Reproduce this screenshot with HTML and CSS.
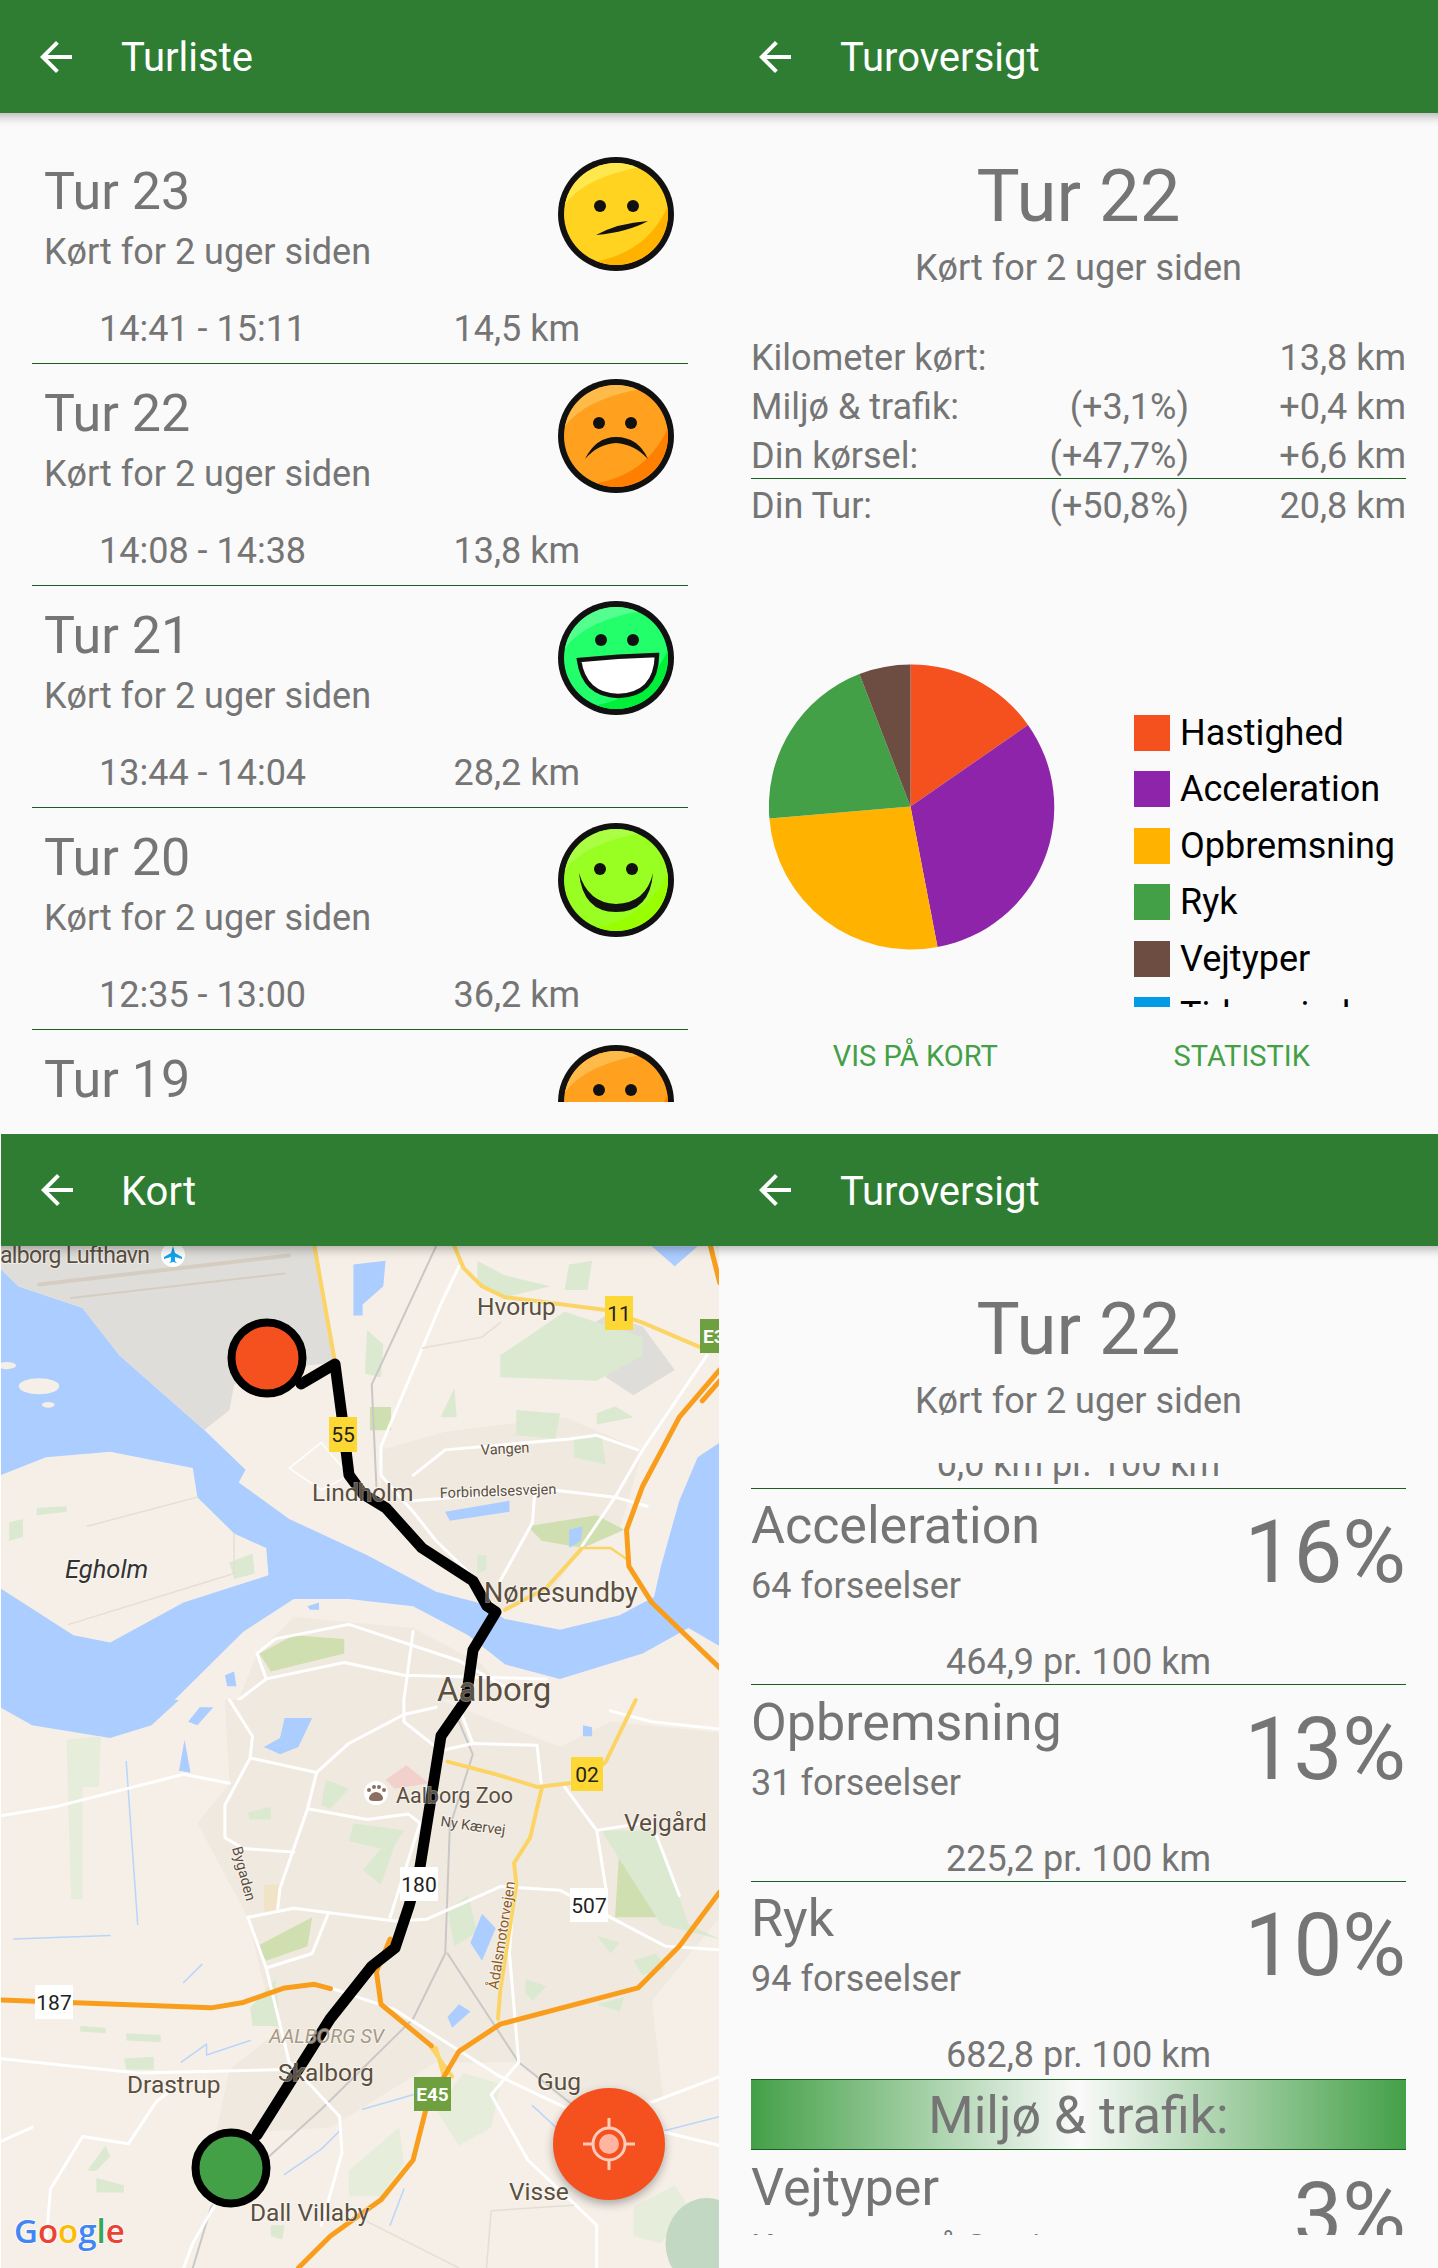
FILE: index.html
```html
<!DOCTYPE html>
<html lang="da">
<head>
  <meta charset="UTF-8" />
  <title>Turoversigt</title>
  <link rel="stylesheet" href="styles.css">
</head>
<body>
  <svg class="defs" width="0" height="0">
    <defs>
      <clipPath id="faceClip"><ellipse cx="58" cy="57" rx="52" ry="51"/></clipPath>
      <symbol id="face" viewBox="0 0 116 114">
        <ellipse cx="58" cy="57" rx="58" ry="57" fill="#111"/>
        <g clip-path="url(#faceClip)">
          <rect width="116" height="114" class="face-main"/>
          <path class="face-light" d="M4 52 Q22 20 88 9 L60 0 L0 0 Z"/>
          <path class="face-shade" d="M26 106 Q90 100 112 44 L116 114 L26 114 Z"/>
        </g>
      </symbol>
      <path id="arrow" d="M20 11H7.83l5.59-5.59L12 4l-8 8 8 8 1.41-1.41L7.83 13H20v-2z"/>
    </defs>
  </svg>

  <div class="screens">
    <!-- trip list -->
    <section class="screen">
      <header class="appbar">
        <svg class="back" viewBox="0 0 24 24"><use href="#arrow"/></svg>
        <h2>Turliste</h2>
      </header>
      <div class="trips">
        <div class="trip">
          <div class="trip-top">
            <div class="trip-text">
              <h3>Tur 23</h3>
              <p>Kørt for 2 uger siden</p>
            </div>
            <svg class="smiley yellow" viewBox="0 0 116 114">
              <use href="#face"/>
              <ellipse class="eye" cx="42" cy="49" rx="6" ry="6"/>
              <ellipse class="eye" cx="75" cy="49" rx="6" ry="6"/>
              <path class="eye" d="M38 78 Q60 66 90 64 Q70 75 38 78Z"/>
            </svg>
          </div>
          <div class="trip-meta"><span>14:41 - 15:11</span><span>14,5 km</span></div>
        </div>
        <div class="trip">
          <div class="trip-top">
            <div class="trip-text">
              <h3>Tur 22</h3>
              <p>Kørt for 2 uger siden</p>
            </div>
            <svg class="smiley orange" viewBox="0 0 116 114">
              <use href="#face"/>
              <ellipse class="eye" cx="41" cy="44" rx="6" ry="6"/>
              <ellipse class="eye" cx="73" cy="44" rx="6" ry="6"/>
              <path class="eye" d="M27 80 Q38 58 58 58 Q80 58 90 80 Q76 65 58 64 Q40 65 27 80Z"/>
            </svg>
          </div>
          <div class="trip-meta"><span>14:08 - 14:38</span><span>13,8 km</span></div>
        </div>
        <div class="trip">
          <div class="trip-top">
            <div class="trip-text">
              <h3>Tur 21</h3>
              <p>Kørt for 2 uger siden</p>
            </div>
            <svg class="smiley green" viewBox="0 0 116 114">
              <use href="#face"/>
              <ellipse class="eye" cx="43" cy="39" rx="6" ry="6"/>
              <ellipse class="eye" cx="75" cy="39" rx="6" ry="6"/>
              <path class="mouth" d="M21 59 Q60 55 99 54 Q98 94 60 95 Q26 94 21 59Z"/>
            </svg>
          </div>
          <div class="trip-meta"><span>13:44 - 14:04</span><span>28,2 km</span></div>
        </div>
        <div class="trip">
          <div class="trip-top">
            <div class="trip-text">
              <h3>Tur 20</h3>
              <p>Kørt for 2 uger siden</p>
            </div>
            <svg class="smiley lime" viewBox="0 0 116 114">
              <use href="#face"/>
              <ellipse class="eye" cx="42" cy="46" rx="6" ry="6"/>
              <ellipse class="eye" cx="74" cy="46" rx="6" ry="6"/>
              <path class="eye" d="M21 50 Q25 89 58 89 Q92 89 95 50 Q88 80 58 81 Q30 80 21 50Z"/>
            </svg>
          </div>
          <div class="trip-meta"><span>12:35 - 13:00</span><span>36,2 km</span></div>
        </div>
        <div class="trip">
          <div class="trip-top">
            <div class="trip-text">
              <h3>Tur 19</h3>
              <p>Kørt for 2 uger siden</p>
            </div>
            <svg class="smiley orange" viewBox="0 0 116 114">
              <use href="#face"/>
              <ellipse class="eye" cx="41" cy="45" rx="6" ry="6"/>
              <ellipse class="eye" cx="73" cy="45" rx="6" ry="6"/>
            </svg>
          </div>
        </div>
      </div>
    </section>

    <!-- trip overview -->
    <section class="screen">
      <header class="appbar">
        <svg class="back" viewBox="0 0 24 24"><use href="#arrow"/></svg>
        <h2>Turoversigt</h2>
      </header>
      <div class="heading">
        <h1>Tur 22</h1>
        <p>Kørt for 2 uger siden</p>
      </div>
      <div class="summary">
        <div class="summary-row"><span>Kilometer kørt:</span><span></span><span>13,8 km</span></div>
        <div class="summary-row"><span>Miljø &amp; trafik:</span><span>(+3,1%)</span><span>+0,4 km</span></div>
        <div class="summary-row ruled"><span>Din kørsel:</span><span>(+47,7%)</span><span>+6,6 km</span></div>
        <div class="summary-row"><span>Din Tur:</span><span>(+50,8%)</span><span>20,8 km</span></div>
      </div>
      <div class="chart">
        <svg class="pie" viewBox="0 0 286 286">
          <path class="slice-speed" d="M141.5 142.5 V0.5 A142 142 0 0 1 259 61 Z"/>
          <path class="slice-accel" d="M141.5 142.5 L259 61 A142 142 0 0 1 168.5 283 Z"/>
          <path class="slice-brake" d="M141.5 142.5 L168.5 283 A142 142 0 0 1 0.4 154.5 Z"/>
          <path class="slice-jerk" d="M141.5 142.5 L0.4 154.5 A142 142 0 0 1 90.4 10 Z"/>
          <path class="slice-road" d="M141.5 142.5 L90.4 10 A142 142 0 0 1 141.5 0.5 Z"/>
        </svg>
        <ul class="legend">
          <li><i class="slice-speed"></i>Hastighed</li>
          <li><i class="slice-accel"></i>Acceleration</li>
          <li><i class="slice-brake"></i>Opbremsning</li>
          <li><i class="slice-jerk"></i>Ryk</li>
          <li><i class="slice-road"></i>Vejtyper</li>
          <li><i class="slice-time"></i>Tidsperiode</li>
        </ul>
      </div>
      <div class="actions">
        <a href="#">VIS PÅ KORT</a>
        <a href="#">STATISTIK</a>
      </div>
    </section>

    <!-- map -->
    <section class="screen map-screen">
      <header class="appbar">
        <svg class="back" viewBox="0 0 24 24"><use href="#arrow"/></svg>
        <h2>Kort</h2>
      </header>
      <div class="map">
        <svg class="map-canvas" viewBox="1 1246 718 1022">
          <rect class="land" x="0" y="1246" width="720" height="1022"/>

          <!-- north of the fjord -->
          <g transform="matrix(.459 0 0 .3635 0 1130)">
            <path class="water" d="M0 380 L40 430 L180 490 L260 620 L445 825 L535 935 L520 970 L630 1070 L800 1170 L950 1270 L1040 1300 L1100 1345 L1220 1375 L1350 1335 L1425 1285 L1440 1200 L1480 1020 L1520 900 L1568 860 L1568 1420 L1500 1370 L1400 1440 L1220 1510 L1100 1470 L1020 1390 L900 1310 L760 1290 L640 1290 L530 1380 L380 1568 L0 1568 Z"/>
            <path class="land" d="M0 950 L100 900 L240 885 L420 930 L430 1010 L510 1110 L580 1150 L585 1225 L400 1300 L240 1410 L160 1390 L0 1260 Z"/>
            <ellipse class="land" cx="85" cy="705" rx="44" ry="22"/>
            <ellipse class="land" cx="15" cy="648" rx="20" ry="10"/>
            <ellipse class="land" cx="105" cy="756" rx="14" ry="8"/>
            <path class="airport" d="M0 320 L690 320 L730 640 L650 650 L510 700 L500 770 L445 825 L260 620 L180 490 L40 430 L0 380 Z"/>
            <path class="urban" d="M830 880 L970 830 L1230 790 L1400 880 L1350 1100 L1270 1150 L1200 1270 L1090 1320 L1000 1220 L900 1100 L830 1000 Z"/>
            <path class="urban" d="M560 1440 L640 1340 L900 1370 L1050 1470 L1110 1568 L520 1568 Z"/>
            <path class="airport" d="M1270 550 L1320 510 L1400 540 L1470 660 L1380 730 L1320 680 Z"/>
            <path class="park" d="M1040 360 L1100 400 L1200 430 L1100 460 L1040 420 Z"/>
            <path class="park" d="M1240 370 L1290 360 L1280 440 L1230 440 Z"/>
            <path class="park" d="M1090 620 L1230 500 L1400 570 L1400 620 L1300 690 L1090 680 Z"/>
            <path class="park" d="M800 550 L835 590 L830 680 L795 670 Z"/>
            <rect class="park-dark" x="806" y="762" width="46" height="64"/>
            <path class="park" d="M960 790 L990 710 L995 790 Z"/>
            <path class="park" d="M1125 770 L1220 780 L1210 850 L1125 840 Z"/>
            <path class="park" d="M1250 850 L1310 840 L1320 920 L1250 900 Z"/>
            <path class="park" d="M1300 780 L1340 760 L1380 790 L1300 810 Z"/>
            <path class="park-dark" d="M1150 1090 L1300 1060 L1360 1100 L1270 1150 L1180 1130 Z"/>
            <path class="park" d="M1040 1170 L1060 1170 L1060 1210 L1040 1220 Z"/>
            <path class="park-dark" d="M565 1440 L640 1390 L750 1400 L750 1440 L590 1490 Z"/>
            <path class="park" d="M500 1190 L550 1165 L555 1220 L510 1235 Z"/>
            <path class="park" d="M80 1040 L145 1035 L145 1050 L80 1060 Z"/>
            <path class="park" d="M20 1080 L50 1070 L50 1120 L20 1130 Z"/>
            <path class="water" d="M770 370 L840 360 L835 430 L790 480 L790 510 L770 510 Z"/>
            <path class="water" d="M970 1050 L1110 1020 L1110 1050 L980 1075 Z"/>
            <path class="water" d="M1240 1100 L1270 1090 L1265 1130 L1240 1150 Z"/>
            <path class="water" d="M1420 320 L1470 375 L1520 320 Z"/>
            <path class="water" d="M670 1310 L695 1300 L695 1320 L675 1320 Z"/>
            <path class="water" d="M490 1500 L510 1490 L515 1530 L495 1530 Z"/>
            <path class="rail" d="M950 320 L810 700 L820 980"/>
            <path class="runway" d="M85 425 L630 345"/>
            <path class="runway thin" d="M155 462 L620 395"/>
            <path class="road" d="M1000 375 L960 480 L880 720 L830 870 L830 950 L900 1050 L950 1130 L1040 1240"/>
            <path class="road" d="M900 950 L970 880 L1240 850 L1300 840 L1390 880"/>
            <path class="road" d="M900 1020 L1200 990 L1340 1010 L1410 1035"/>
            <path class="road" d="M1540 620 L1400 880 L1340 1010 L1265 1150"/>
            <path class="road" d="M1165 1000 L1160 1080 L1090 1240"/>
            <path class="road" d="M560 1440 L600 1400 L760 1360 L1000 1460 L1110 1540"/>
            <path class="road" d="M900 1380 L880 1568"/>
            <path class="road" d="M560 1440 L580 1510 L750 1465 L880 1500 L1190 1510"/>
            <path class="road" d="M520 1568 L580 1510"/>
            <path class="road thin" d="M630 930 L700 860 L760 950 L700 990 Z"/>
            <path class="minor" d="M190 1090 L430 1010 M150 1360 L510 1220 L510 1110"/>
            <path class="minor" d="M920 600 L1050 570 L1090 530"/>
            <path class="yellow-road" d="M685 320 L730 640"/>
            <path class="yellow-road" d="M990 320 L1010 380 L1050 430 L1100 460 L1320 495 L1400 530 L1530 600"/>
            <path class="yellow-road" d="M1265 1155 L1190 1260 L1100 1320"/>
            <path class="yellow-road thin" d="M1265 1150 L1330 1150 L1365 1180"/>
            <path class="highway" d="M1548 320 L1568 420"/>
            <path class="highway" d="M1568 660 L1480 790 L1400 980 L1365 1100 L1370 1200 L1420 1300 L1568 1480"/>
            <path class="highway" d="M1530 745 L1568 690"/>
          </g>

          <!-- south of the fjord -->
          <g transform="matrix(.459 0 0 .3622 0 1700)">
            <path class="water" d="M0 0 L390 0 L330 70 L240 105 L70 70 L0 20 Z"/>
            <path class="urban" d="M490 0 L960 0 L1220 130 L1330 60 L1568 90 L1568 600 L1420 830 L1445 1100 L1240 1120 L1130 1000 L950 1000 L720 1180 L470 1200 L500 1020 L600 920 L540 600 L430 340 L500 230 Z"/>
            <path class="park-pale" d="M145 110 L220 100 L215 240 L180 240 L180 550 L155 550 Z"/>
            <path class="park" d="M710 220 L760 245 L720 300 L700 290 Z"/>
            <path class="park" d="M540 310 L590 295 L590 330 L545 330 Z"/>
            <path class="park" d="M770 340 L880 360 L860 400 L830 510 L790 470 L830 410 L760 390 Z"/>
            <path class="park-dark" d="M560 680 L680 600 L670 680 L580 720 Z"/>
            <path class="park-dark" d="M1350 400 L1440 600 L1340 600 Z"/>
            <path class="park" d="M1310 360 L1430 360 L1500 620 L1568 660 L1440 620 Z"/>
            <path class="park" d="M1300 650 L1350 670 L1330 700 Z"/>
            <path class="park" d="M1380 720 L1430 700 L1450 740 L1400 760 Z"/>
            <path class="park" d="M1145 770 L1190 790 L1160 830 L1145 810 Z"/>
            <path class="park" d="M975 580 L1020 540 L1040 640 L990 680 Z"/>
            <path class="park" d="M1300 840 L1360 820 L1350 860 Z"/>
            <path class="park" d="M175 900 L230 905 L230 920 L175 915 Z"/>
            <path class="park" d="M275 920 L350 925 L350 945 L275 940 Z"/>
            <path class="park" d="M270 990 L335 985 L335 1020 L275 1020 Z"/>
            <path class="park-pale" d="M950 1130 L1010 1030 L1090 1060 L1070 1180 L1000 1230 Z"/>
            <path class="park" d="M190 1300 L230 1230 L240 1260 L210 1300 Z"/>
            <path class="park-pale" d="M760 1300 L870 1180 L880 1280 L830 1370 L760 1370 Z"/>
            <path class="park" d="M590 1450 L620 1450 L615 1490 L590 1480 Z"/>
            <path class="park" d="M210 1320 L270 1340 L270 1360 L210 1360 Z"/>
            <path class="park" d="M545 850 L600 770 L610 900 L550 900 Z"/>
            <path class="park-pale" d="M1380 1400 L1470 1340 L1500 1400 L1440 1500 L1380 1480 Z"/>
            <ellipse class="teal" cx="1540" cy="1500" rx="90" ry="125"/>
            <path class="zoo" d="M840 220 L885 180 L935 230 L860 245 Z"/>
            <path class="sand" d="M575 510 L610 510 L605 590 L575 590 Z"/>
            <path class="water" d="M620 50 L680 50 L650 130 L610 150 L575 130 L610 105 Z"/>
            <path class="water" d="M435 20 L465 20 L430 70 L410 60 Z"/>
            <path class="water" d="M402 110 L415 200 L390 195 Z"/>
            <path class="water" d="M1050 590 L1080 630 L1050 720 L1025 670 Z"/>
            <path class="water" d="M1000 840 L1025 860 L985 905 L975 875 Z"/>
            <path class="water" d="M1270 70 L1290 75 L1290 100 L1270 100 Z"/>
            <path class="stream" d="M620 1310 L700 1240 L740 1190 M850 1450 L880 1350 M1160 1120 L1220 1190 M1445 1190 L1568 1150 M395 1000 L450 950 L450 980 L545 940 M790 1130 L900 1090 M275 170 L300 620 M30 660 L240 650 M400 780 L440 730"/>
            <path class="rail" d="M1000 60 L1030 150 L980 350 L970 700 L900 880 L700 1130 L560 1290 L460 1400 L420 1568"/>
            <path class="rail" d="M975 700 L1130 1000 L1250 1120"/>
            <path class="road" d="M500 0 L550 100 L545 160 L690 200 M545 160 L490 290 L490 380 L530 410 L640 420"/>
            <path class="road" d="M0 320 L120 295 L400 205 L500 230"/>
            <path class="road" d="M690 200 L760 120 L880 40 L950 20 M880 0 L880 60 L960 140 L1030 120 L1170 125 L1180 240"/>
            <path class="road" d="M690 200 L670 300 L610 520 L605 575 M670 300 L800 330 L890 315 L915 340 L885 460 L850 600"/>
            <path class="road" d="M540 600 L640 575 L860 610 L930 605 L1090 515 L1220 525 L1330 600 L1450 680 L1568 690"/>
            <path class="road" d="M540 600 L580 740 L630 1000 L740 1150 L745 1250 L700 1450"/>
            <path class="road" d="M580 740 L680 700 L715 590"/>
            <path class="road" d="M720 795 L860 855 L1090 1040 L1240 1130"/>
            <path class="road" d="M0 990 L300 1030 L620 1020"/>
            <path class="road" d="M1130 1000 L1070 1090 L1150 1270 L1300 1450 L1300 1568"/>
            <path class="road" d="M1130 1000 L1110 700 L1120 510"/>
            <path class="road" d="M1230 240 L1300 360 L1320 520 M1300 360 L1400 340 M1330 30 L1420 60 L1568 80 M1420 340 L1480 540"/>
            <path class="road" d="M1420 1110 L1568 1040 M1000 20 L1030 120 M1240 1130 L1568 1230"/>
            <path class="road" d="M0 1220 L70 1180 M100 1500 L110 1350 L180 1205 L280 1225 L340 1110 L380 1070"/>
            <path class="road" d="M470 1390 L420 1500 L400 1568"/>
            <path class="minor" d="M1070 1410 L1250 1395 M800 1440 L1000 1568 M1070 1410 L1060 1568"/>
            <path class="yellow-road" d="M975 170 L1080 205 L1170 240 L1240 230"/>
            <path class="yellow-road" d="M1385 0 L1320 170 L1290 205"/>
            <path class="yellow-road" d="M1180 245 L1155 380 L1120 450 L1125 510 L1090 800 L1085 880"/>
            <path class="yellow-road" d="M940 960 L985 1040 M950 960 L965 1030"/>
            <path class="highway" d="M0 828 L460 850 L530 835 L620 795 L685 785 L720 797"/>
            <path class="highway" d="M850 660 L820 750 L830 840 L940 955"/>
            <path class="highway" d="M1568 530 L1480 680 L1390 795 L1090 895 L1000 970 L930 1120 L900 1270 L830 1380 L720 1480 L650 1568"/>
          </g>

          <!-- trip route -->
          <path class="route" d="M301 1384 L335 1364 L342 1417 L349 1475 L363 1494 L386 1508 L422 1548 L473 1581 L487 1606 L496 1612 L473 1650 L466 1700 L441 1736 L434 1780 L420 1867 L409 1906 L395 1948 L372 1966 L330 2019 L257 2135"/>
          <circle class="pin start" cx="267" cy="1358" r="35.5"/>
          <circle class="pin end" cx="231" cy="2168" r="35.5"/>

          <text class="label small-label" x="0" y="1263" textLength="150">alborg Lufthavn</text>
          <circle class="poi" cx="173" cy="1255" r="12"/>
          <path class="plane" d="M173 1246 L175 1253 L182 1257 L182 1259 L175 1257 L175 1261 L177 1263 L173 1262 L169 1263 L171 1261 L171 1257 L164 1259 L164 1257 L171 1253 Z"/>
          <text class="label mid-label" x="477" y="1315">Hvorup</text>
          <text class="label tiny-label" x="481" y="1455" transform="rotate(-3 481 1455)">Vangen</text>
          <text class="label mid-label" x="312" y="1501">Lindholm</text>
          <text class="label tiny-label" x="440" y="1498" transform="rotate(-2 440 1498)">Forbindelsesvejen</text>
          <text class="label italic" x="65" y="1578">Egholm</text>
          <text class="label" x="484" y="1602">Nørresundby</text>
          <text class="label big-label" x="437" y="1701">Aalborg</text>
          <circle class="poi" cx="376" cy="1793" r="12"/>
          <path class="paw" d="M376 1792 c4 0 7 4 7 6 c0 3-3 3-7 3 c-4 0-7 0-7-3 c0-2 3-6 7-6Z"/>
          <circle class="paw" cx="369" cy="1790" r="2"/>
          <circle class="paw" cx="374" cy="1787" r="2"/>
          <circle class="paw" cx="379" cy="1787" r="2"/>
          <circle class="paw" cx="384" cy="1790" r="2"/>
          <text class="label zoo-label" x="396" y="1803">Aalborg Zoo</text>
          <text class="label tiny-label" x="440" y="1826" transform="rotate(8 440 1826)">Ny Kærvej</text>
          <text class="label mid-label" x="624" y="1831">Vejgård</text>
          <text class="label tiny-label" x="232" y="1848" transform="rotate(75 232 1848)">Bygaden</text>
          <text class="label tiny-label road-name" x="498" y="1990" transform="rotate(-81 498 1990)">Ådalsmotorvejen</text>
          <text class="label district" x="269" y="2043">AALBORG SV</text>
          <text class="label mid-label" x="278" y="2081">Skalborg</text>
          <text class="label mid-label" x="127" y="2093">Drastrup</text>
          <text class="label mid-label" x="537" y="2090">Gug</text>
          <text class="label mid-label" x="509" y="2200">Visse</text>
          <text class="label mid-label" x="250" y="2221">Dall Villaby</text>

          <g class="shield yellow-shield"><rect x="605" y="1296" width="28" height="34"/><text x="619" y="1321">11</text></g>
          <g class="shield yellow-shield"><rect x="329" y="1417" width="28" height="35"/><text x="343" y="1442">55</text></g>
          <g class="shield yellow-shield"><rect x="571" y="1757" width="32" height="34"/><text x="587" y="1782">02</text></g>
          <g class="shield white-shield"><rect x="400" y="1867" width="38" height="34"/><text x="419" y="1892">180</text></g>
          <g class="shield white-shield"><rect x="570" y="1888" width="38" height="34"/><text x="589" y="1913">507</text></g>
          <g class="shield white-shield"><rect x="35" y="1985" width="38" height="34"/><text x="54" y="2010">187</text></g>
          <g class="shield green-shield"><rect x="414" y="2077" width="37" height="34"/><text x="432.500" y="2101">E45</text></g>
          <g class="shield green-shield"><rect x="700" y="1319" width="22" height="34"/><text x="703" y="1343" class="start-text">E3</text></g>

          <text class="google" x="14" y="2243"><tspan class="g-blue">G</tspan><tspan class="g-red">o</tspan><tspan class="g-yellow">o</tspan><tspan class="g-blue">g</tspan><tspan class="g-green">l</tspan><tspan class="g-red">e</tspan></text>
        </svg>
        <button class="fab">
          <svg viewBox="0 0 56 56">
            <path class="fab-lines" d="M28 2V12 M28 44V54 M2 28H12 M44 28H54"/>
            <circle class="fab-ring" cx="28" cy="28" r="16"/>
            <circle class="fab-dot" cx="28" cy="28" r="10"/>
          </svg>
        </button>
      </div>
    </section>

    <!-- overview scrolled down -->
    <section class="screen">
      <header class="appbar">
        <svg class="back" viewBox="0 0 24 24"><use href="#arrow"/></svg>
        <h2>Turoversigt</h2>
      </header>
      <div class="heading">
        <h1>Tur 22</h1>
        <p>Kørt for 2 uger siden</p>
      </div>
      <div class="details">
        <div class="details-inner">
          <div class="rate first-rate">0,0 km pr. 100 km</div>
          <div class="detail">
            <div class="detail-top">
              <div><h3>Acceleration</h3><p>64 forseelser</p></div>
              <strong>16%</strong>
            </div>
            <div class="rate">464,9 pr. 100 km</div>
          </div>
          <div class="detail">
            <div class="detail-top">
              <div><h3>Opbremsning</h3><p>31 forseelser</p></div>
              <strong>13%</strong>
            </div>
            <div class="rate">225,2 pr. 100 km</div>
          </div>
          <div class="detail no-rule">
            <div class="detail-top">
              <div><h3>Ryk</h3><p>94 forseelser</p></div>
              <strong>10%</strong>
            </div>
            <div class="rate">682,8 pr. 100 km</div>
          </div>
          <div class="band">Miljø &amp; trafik:</div>
          <div class="detail">
            <div class="detail-top">
              <div><h3>Vejtyper</h3><p>Kørt mest på 2 vejtyper</p></div>
              <strong>3%</strong>
            </div>
          </div>
        </div>
      </div>
    </section>
  </div>
</body>
</html>
```

FILE: styles.css
```css
* {
  box-sizing: border-box;
}

body {
  margin: 0;
  background: #fff;
  font-family: Roboto, sans-serif;
  color: #757575;
}

h1, h2, h3, p, ul {
  margin: 0;
  padding: 0;
  font-weight: 400;
}

.defs {
  position: absolute;
}

.screens {
  display: grid;
  grid-template-columns: 719px 719px;
  grid-template-rows: 1134px 1134px;
  width: 1438px;
  height: 2268px;
  overflow: hidden;
}

.screen {
  background: #fafafa;
  display: flex;
  flex-direction: column;
  overflow: hidden;
  min-width: 0;
}

/* runs past the screen edges so the shadow does not fade at the corners */
.appbar {
  position: relative;
  z-index: 2;
  flex: none;
  height: 113px;
  margin: 0 -16px;
  padding-left: 48px;
  display: flex;
  align-items: center;
  gap: 41px;
  background: #2e7d32;
  box-shadow: 0 3px 10px rgba(0, 0, 0, 0.3);
}

.appbar h2 {
  padding-top: 3px;
  color: #fff;
  font-size: 40px;
  line-height: 48px;
}

.back {
  width: 48px;
  height: 48px;
  fill: #fff;
}

/* trip list */
.trips {
  margin: 29px 31px 0 32px;
  height: 960px;
  overflow: hidden;
}

.trip {
  height: 222px;
  padding-left: 12px;
  padding-top: 17px;
  border-bottom: 1px solid #1b5e20;
}

.trip-top {
  display: flex;
  justify-content: space-between;
}

.trip-text h3 {
  font-size: 52px;
  line-height: 66px;
}

.trip-text p {
  margin-top: 4.500px;
  font-size: 36px;
  line-height: 44px;
}

.smiley {
  flex: none;
  width: 116px;
  height: 114px;
  margin-top: -2px;
  margin-right: 14px;
}

.eye {
  fill: #111;
}

.mouth {
  fill: #fff;
  stroke: #111;
  stroke-width: 4.5;
}

.face-main { fill: var(--main); }
.face-light { fill: var(--light); }
.face-shade { fill: var(--shade); }

.yellow { --main: #ffd31f; --light: #ffe84d; --shade: #ffb300; }
.orange { --main: #ffa11f; --light: #ffbb4a; --shade: #ff7f00; }
.green { --main: #22ff6a; --light: #55ff8f; --shade: #00f03a; }
.lime { --main: #99ff22; --light: #aaff44; --shade: #99ff00; }

.trip-meta {
  display: flex;
  justify-content: space-between;
  width: 481px;
  margin: 33.500px 0 0 55px;
  font-size: 36px;
  line-height: 44px;
}

/* overview */
.heading {
  flex: none;
  padding-top: 42px;
  text-align: center;
}

.heading h1 {
  font-size: 72.500px;
  line-height: 84px;
}

.heading p {
  margin-top: 7px;
  font-size: 36px;
  line-height: 44px;
}

.summary {
  margin: 43.500px 32px 0;
  font-size: 36px;
  line-height: 49px;
}

.summary-row {
  display: grid;
  grid-template-columns: 1fr 201px 217px;
  height: 49px;
}

.summary-row span + span {
  text-align: right;
}

.ruled {
  height: 47px;
  border-bottom: 1px solid #1b5e20;
  margin-bottom: 3px;
}

.chart {
  display: flex;
  height: 355px;
  margin-top: 121px;
  padding-left: 50px;
  overflow: hidden;
}

.pie {
  flex: none;
  width: 286px;
  height: 286px;
  margin-top: 12.500px;
}

.legend {
  list-style: none;
  margin-left: 79px;
  padding-top: 63px;
  color: #000;
  font-size: 36px;
  line-height: 36px;
}

.legend li {
  display: flex;
  align-items: center;
  gap: 10px;
  height: 36px;
  margin-bottom: 20.5px;
  white-space: nowrap;
}

.legend i {
  flex: none;
  width: 36px;
  height: 36px;
}

.slice-speed { fill: #f4511e; background: #f4511e; }
.slice-accel { fill: #8e24aa; background: #8e24aa; }
.slice-brake { fill: #ffb300; background: #ffb300; }
.slice-jerk { fill: #43a047; background: #43a047; }
.slice-road { fill: #6d4c41; background: #6d4c41; }
.slice-time { background: #039be5; }

.actions {
  display: grid;
  grid-template-columns: 1fr 1fr;
  margin-top: 29px;
  padding: 0 33px;
  text-align: center;
  font-size: 29px;
  line-height: 40px;
}

.actions a {
  color: #43a047;
  text-decoration: none;
}

/* map */
.map-screen {
  margin-left: 1px;
}

.map-screen .appbar {
  height: 112px;
  gap: 40px;
}

.map {
  position: relative;
  flex: 1;
  min-height: 0;
}

.map-canvas {
  display: block;
  width: 718px;
  height: 1022px;
}

.map-canvas path,
.map-canvas ellipse {
  vector-effect: non-scaling-stroke;
}

.land { fill: #f5efe7; }
.water { fill: #abcdff; }
.airport { fill: #dfddd9; }
.urban { fill: #f0e9e0; }
.park { fill: #dbe9d1; }
.park-dark { fill: #cfdfb0; }
.park-pale { fill: #e6eddb; }
.teal { fill: #c3d8c2; }
.zoo { fill: #f2d0cc; }
.sand { fill: #f0e3c8; }

.road, .minor, .rail, .runway, .highway, .yellow-road, .stream {
  fill: none;
  stroke-linejoin: round;
  stroke-linecap: round;
}

.road { stroke: #fff; stroke-width: 3; }
.road.thin { stroke-width: 1.500; }
.minor { stroke: #e6ded2; stroke-width: 1.500; }
.rail { stroke: #c9c8c6; stroke-width: 2; }
.runway { stroke: #d6cdc2; stroke-width: 4; }
.runway.thin { stroke-width: 2; }
.stream { stroke: #b9d5fb; stroke-width: 1.500; }
.yellow-road { stroke: #fbd465; stroke-width: 4; }
.yellow-road.thin { stroke-width: 2.500; }
.highway { stroke: #f99e1c; stroke-width: 5; }

.route {
  fill: none;
  stroke: #000;
  stroke-width: 11;
  stroke-linejoin: round;
  stroke-linecap: round;
}

.pin {
  stroke: #000;
  stroke-width: 8;
}

.pin.start { fill: #f4511e; }
.pin.end { fill: #43a047; }

.label {
  font-family: Roboto, sans-serif;
  font-size: 27px;
  fill: #5b4f3f;
  stroke: rgba(255, 255, 255, 0.45);
  stroke-width: 2;
  paint-order: stroke;
}

.small-label { font-size: 23px; }
.mid-label { font-size: 24.500px; }
.zoo-label { font-size: 21.500px; }
.tiny-label { font-size: 14.500px; }
.big-label { font-size: 33px; }
.italic { font-style: italic; font-size: 25.500px; fill: #333; }
.road-name { fill: #8a5a1e; }
.district { font-style: italic; font-size: 20px; fill: #a89a85; }

.poi { fill: #fff; }
.plane { fill: #12a5ec; }
.paw { fill: #8d6e63; }

.shield text {
  font-family: Roboto, sans-serif;
  font-size: 21px;
  text-anchor: middle;
  fill: #222;
}

.shield text.start-text { text-anchor: start; }
.yellow-shield rect { fill: #fdd835; }
.white-shield rect { fill: #fff; }
.green-shield rect { fill: #6fa03f; }
.green-shield text { fill: #fff; font-size: 19px; font-weight: 700; }

.google {
  font-family: "Open Sans", sans-serif;
  font-size: 33px;
  font-weight: 600;
  stroke: rgba(255, 255, 255, 0.7);
  stroke-width: 2;
  paint-order: stroke;
}

.g-blue { fill: #4285f4; }
.g-red { fill: #ea4335; }
.g-yellow { fill: #fbbc05; }
.g-green { fill: #34a853; }

.fab {
  position: absolute;
  left: 552px;
  top: 842px;
  width: 112px;
  height: 112px;
  padding: 28px;
  border: none;
  border-radius: 50%;
  background: #f4511e;
  box-shadow: 0 4px 10px rgba(0, 0, 0, 0.3);
}

.fab svg {
  display: block;
  width: 56px;
  height: 56px;
}

.fab-lines { fill: none; stroke: #ffccbc; stroke-width: 3; }
.fab-ring { fill: #f4511e; stroke: #ffccbc; stroke-width: 3; }
.fab-dot { fill: #ffb5a0; }

/* scrolled details */
.screen:last-child .appbar {
  height: 112px;
}

.details {
  height: 772px;
  margin-top: 40px;
  overflow: hidden;
}

.details-inner {
  padding: 0 32px;
}

.rate {
  text-align: center;
  font-size: 36px;
  line-height: 44px;
}

.first-rate {
  margin-top: -21px;
  padding-bottom: 1.800px;
  border-bottom: 1px solid #1b5e20;
}

.detail {
  height: 196.500px;
  padding-top: 7.600px;
  border-bottom: 1px solid #1b5e20;
}

.no-rule {
  height: 197.500px;
  border-bottom: none;
}

.detail-top {
  display: flex;
  justify-content: space-between;
  height: 112px;
}

.detail h3 {
  font-size: 52px;
  line-height: 60px;
}

.detail p {
  margin-top: 8px;
  font-size: 36px;
  line-height: 44px;
}

.detail strong {
  margin-top: 13.800px;
  font-size: 87px;
  font-weight: 400;
  line-height: 84px;
}

.detail .rate {
  margin-top: 32px;
}

.band {
  height: 71px;
  border-top: 1px solid #1b5e20;
  border-bottom: 1px solid #1b5e20;
  background: linear-gradient(90deg, #43a047, #fafafa 50%, #43a047);
  text-align: center;
  font-size: 52px;
  line-height: 71px;
}
```
